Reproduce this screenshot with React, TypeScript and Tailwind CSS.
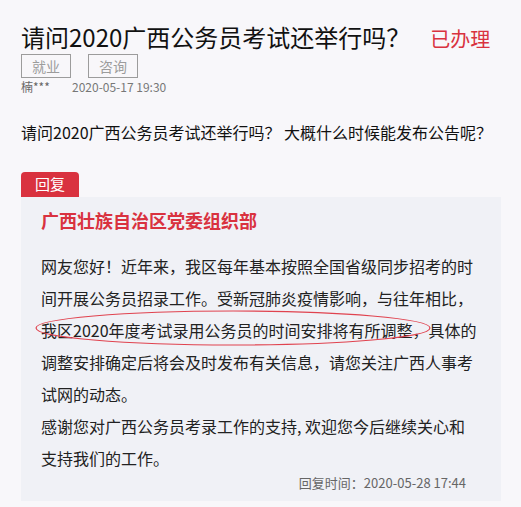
export default function App() {
  return (
    <div
      className="min-h-screen bg-[#f8f7fa] px-[21px] pt-[20px] text-[#111]"
      style={{ fontFamily: '"Noto Sans CJK SC", "Noto Sans", sans-serif' }}
    >
      {/* Title */}
      <div className="flex items-baseline">
        <h1 className="text-[24px] leading-[34px] font-normal text-[#111]">请问2020广西公务员考试还举行吗？</h1>
        <span className="ml-[20px] text-[20px] leading-[34px] text-[#d9323f]">已办理</span>
      </div>

      {/* Tags */}
      <div className="flex gap-[17px] mt-[-2px]">
        <span className="h-[24px] w-[50px] flex items-center justify-center border border-[#9c9c9c] text-[14px] text-[#9c9c9c]">就业</span>
        <span className="h-[24px] w-[50px] flex items-center justify-center border border-[#9c9c9c] text-[14px] text-[#9c9c9c]">咨询</span>
      </div>

      {/* Meta */}
      <div className="flex text-[12px] leading-[18px] text-[#777]">
        <span className="w-[51px] text-[#666]">楠***</span>
        <span>2020-05-17 19:30</span>
      </div>

      {/* Question */}
      <p className="mt-[24px] text-[16px] leading-[24px] text-[#111]">请问2020广西公务员考试还举行吗？ 大概什么时候能发布公告呢？</p>

      {/* Reply */}
      <div className="mt-[28px] w-[480px]">
        <div className="h-[25px] w-[58px] rounded-t-[4px] bg-[#d9323f] flex items-center justify-center text-[15px] text-white">回复</div>
        <div className="bg-[#f0f1f6] pt-[10px] pb-[9px] pl-[20px] pr-[19px]">
          <h2 className="text-[18px] leading-[27px] font-bold text-[#d9323f]">广西壮族自治区党委组织部</h2>
          <div className="relative mt-[16px] text-[16px] leading-[32px] text-[#222]">
            <p>网友您好！近年来，我区每年基本按照全国省级同步招考的时间开展公务员招录工作。受新冠肺炎疫情影响，与往年相比，我区2020年度考试录用公务员的时间安排将有所调整，具体的调整安排确定后将会及时发布有关信息，请您关注广西人事考试网的动态。</p>
            <p>
              感谢您对广西公务员考录工作的支持, 欢迎您今后继续关心和
              <br />
              支持我们的工作。
            </p>
            <svg className="absolute left-[-8px] top-[59px] pointer-events-none" width="400" height="38" viewBox="0 0 400 38">
              <ellipse cx="200" cy="19" rx="197" ry="17" fill="none" stroke="#e0434f" strokeWidth="1.2" />
            </svg>
          </div>
          <div className="text-right pr-[16px] text-[13px] leading-[18px] text-[#666]">回复时间：2020-05-28 17:44</div>
        </div>
      </div>
    </div>
  );
}
